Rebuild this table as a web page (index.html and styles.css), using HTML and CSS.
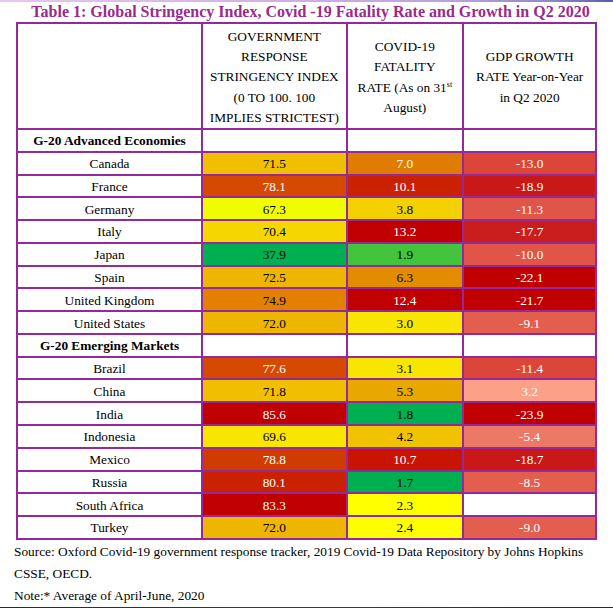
FILE: index.html
```html
<!DOCTYPE html>
<html lang="en">
<head>
<meta charset="utf-8">
<title>Table 1</title>
<link rel="stylesheet" href="styles.css">
</head>
<body>
<div class="topbar"></div>
<h1 class="title">Table 1: Global Stringency Index, Covid -19 Fatality Rate and Growth in Q2 2020</h1>
<table class="data">
  <colgroup>
    <col class="c1"><col class="c2"><col class="c3"><col class="c4">
  </colgroup>
  <thead>
    <tr class="head">
      <th></th>
      <th>GOVERNMENT<br>RESPONSE<br>STRINGENCY INDEX<br>(0 TO 100. 100<br>IMPLIES STRICTEST)</th>
      <th>COVID-19<br>FATALITY<br>RATE (As on 31<sup>st</sup><br>August)</th>
      <th>GDP GROWTH<br>RATE Year-on-Year<br>in Q2 2020</th>
    </tr>
  </thead>
  <tbody>
    <tr class="group"><td>G-20 Advanced Economies</td><td></td><td></td><td></td></tr>
    <tr><td>Canada</td><td class="k-gold">71.5</td><td class="k-orange w">7.0</td><td class="k-r2 w">-13.0</td></tr>
    <tr><td>France</td><td class="k-redorange w">78.1</td><td class="k-red2 w">10.1</td><td class="k-r1 w">-18.9</td></tr>
    <tr><td>Germany</td><td class="k-lime">67.3</td><td class="k-yg">3.8</td><td class="k-r3 w">-11.3</td></tr>
    <tr><td>Italy</td><td class="k-yellowgold">70.4</td><td class="k-dred w">13.2</td><td class="k-r1b w">-17.7</td></tr>
    <tr><td>Japan</td><td class="k-green">37.9</td><td class="k-lgreen">1.9</td><td class="k-r3 w">-10.0</td></tr>
    <tr><td>Spain</td><td class="k-gold2">72.5</td><td class="k-orange2">6.3</td><td class="k-dred w">-22.1</td></tr>
    <tr><td>United Kingdom</td><td class="k-orange3">74.9</td><td class="k-dred w">12.4</td><td class="k-dred w">-21.7</td></tr>
    <tr><td>United States</td><td class="k-gold2">72.0</td><td class="k-yellow">3.0</td><td class="k-r4 w">-9.1</td></tr>
    <tr class="group"><td>G-20 Emerging Markets</td><td></td><td></td><td></td></tr>
    <tr><td>Brazil</td><td class="k-redorange w">77.6</td><td class="k-yellow">3.1</td><td class="k-r2 w">-11.4</td></tr>
    <tr><td>China</td><td class="k-gold">71.8</td><td class="k-amber">5.3</td><td class="k-salmon w">3.2</td></tr>
    <tr><td>India</td><td class="k-dred w">85.6</td><td class="k-green">1.8</td><td class="k-dred w">-23.9</td></tr>
    <tr><td>Indonesia</td><td class="k-yellow">69.6</td><td class="k-yg2">4.2</td><td class="k-r5 w">-5.4</td></tr>
    <tr><td>Mexico</td><td class="k-redorange2 w">78.8</td><td class="k-red3 w">10.7</td><td class="k-r1 w">-18.7</td></tr>
    <tr><td>Russia</td><td class="k-red2 w">80.1</td><td class="k-green">1.7</td><td class="k-r4 w">-8.5</td></tr>
    <tr><td>South Africa</td><td class="k-dred w">83.3</td><td class="k-pyellow">2.3</td><td></td></tr>
    <tr><td>Turkey</td><td class="k-gold2">72.0</td><td class="k-pyellow">2.4</td><td class="k-r4 w">-9.0</td></tr>
  </tbody>
</table>
<div class="notes">
  <p class="src">Source: Oxford Covid-19 government response tracker, 2019 Covid-19 Data Repository by Johns Hopkins</p>
  <p>CSSE, OECD.</p>
  <p>Note:* Average of April-June, 2020</p>
</div>
<div class="bottombar"></div>
</body>
</html>
```

FILE: styles.css
```css
html, body {
  margin: 0;
  padding: 0;
  background: #ffffff;
}
body {
  font-family: "Liberation Serif", "Times New Roman", serif;
  color: #000;
  width: 613px;
}
.topbar {
  height: 2px;
  background: linear-gradient(to right, #e6c8ee 0%, #d2b0e2 45%, #b8a2dc 75%, #8f86c8 90%, #5c5aa6 100%);
}
.title {
  margin: 0;
  height: 20px;
  line-height: 20px;
  font-size: 16px;
  font-weight: bold;
  color: #9a2b8e;
  text-align: center;
  padding-left: 8px;
  white-space: nowrap;
}
.data {
  margin-left: 16px;
  width: 581.3px;
  border-collapse: collapse;
  table-layout: fixed;
  font-size: 13.33px;
}
.c1 { width: 185px; }
.c2 { width: 144.7px; }
.c3 { width: 116.3px; }
.c4 { width: 133.3px; }
.data th, .data td {
  border: 2px solid #93299c;
  padding: 2px 4px 0;
  text-align: center;
  vertical-align: middle;
  line-height: 18px;
  white-space: nowrap;
}
.data th {
  font-weight: normal;
  line-height: 20.2px;
  padding-top: 3px;
}
.data sup {
  font-size: 8px;
  line-height: 0;
  vertical-align: 5px;
}
.head { height: 105.3px; }
.data tbody tr { height: 22.78px; }
.group td:first-child { font-weight: bold; }
.w { color: #ffffff; }

/* stringency */
.k-gold { background: #f0c000; }
.k-gold2 { background: #eeb600; }
.k-yellowgold { background: #f6d600; }
.k-lime { background: #f0fc00; }
.k-green { background: #00b050; }
.k-redorange { background: #d54a00; }
.k-redorange2 { background: #d03c00; }
.k-orange3 { background: #e38000; }
.k-yellow { background: #f8e600; }
.k-pyellow { background: #ffff00; }
.k-dred { background: #c00000; }
.k-red2 { background: #ca2200; }
.k-red3 { background: #c81400; }
/* fatality */
.k-orange { background: #e07c00; }
.k-orange2 { background: #e48c00; }
.k-yg { background: #f3d000; }
.k-yg2 { background: #f0c200; }
.k-lgreen { background: #44c43c; }
.k-amber { background: #e8a800; }
/* gdp */
.k-r1 { background: #c81818; }
.k-r1b { background: #ca1e1e; }
.k-r2 { background: #dc4638; }
.k-r3 { background: #e05548; }
.k-r4 { background: #e45e4e; }
.k-r5 { background: #ec7866; }
.k-salmon { background: #fca088; }

.notes {
  margin-left: 14px;
  width: 569px;
  font-size: 13.33px;
  line-height: 22px;
  padding-top: 1px;
}
.notes p { margin: 0; }
.notes .src {
  text-align: justify;
  text-align-last: justify;
  white-space: nowrap;
}
.bottombar {
  height: 3px;
  background: linear-gradient(to right, #2a2a2a, #3a3a3a 50%, #2a2a2a);
}
```
